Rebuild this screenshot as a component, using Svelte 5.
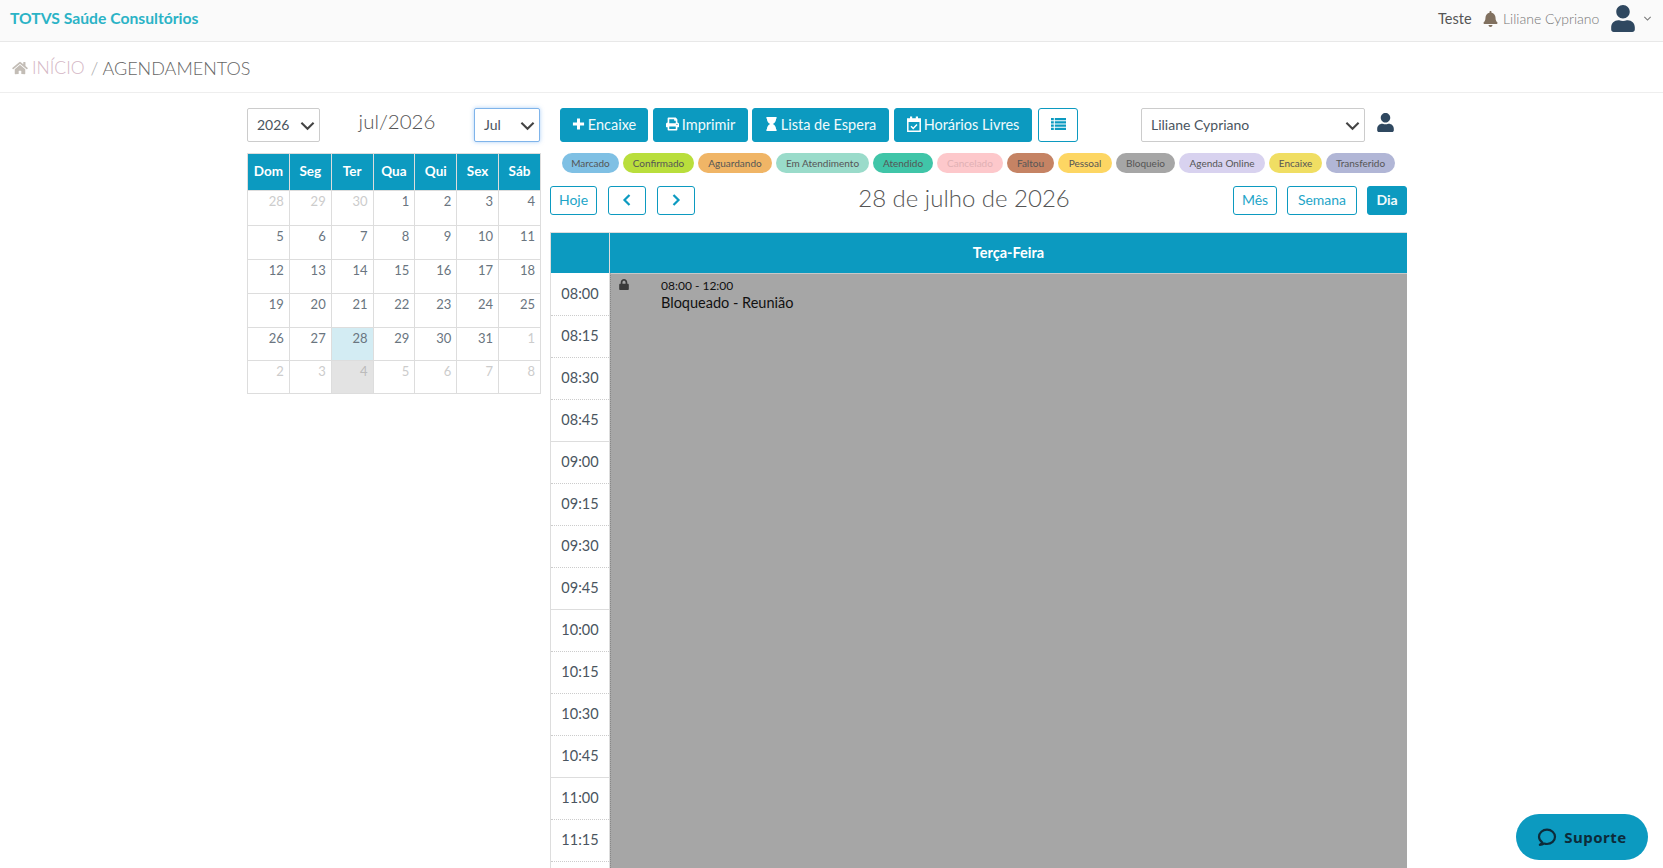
<script>
  const weekDays = ['Dom', 'Seg', 'Ter', 'Qua', 'Qui', 'Sex', 'Sáb']

  const weeks = [
    [[28, 1], [29, 1], [30, 1], [1], [2], [3], [4]],
    [[5], [6], [7], [8], [9], [10], [11]],
    [[12], [13], [14], [15], [16], [17], [18]],
    [[19], [20], [21], [22], [23], [24], [25]],
    [[26], [27], [28, 0, 'today'], [29], [30], [31], [1, 1]],
    [[2, 1], [3, 1], [4, 1, 'shade'], [5, 1], [6, 1], [7, 1], [8, 1]],
  ]

  const legend = [
    ['Marcado', '#7fc0e4', 57],
    ['Confirmado', '#b9de3c', 71],
    ['Aguardando', '#f0b566', 74],
    ['Em Atendimento', '#9adbca', 93],
    ['Atendido', '#40c5a8', 60],
    ['Cancelado', '#fdc8cb', 66, true],
    ['Faltou', '#c58364', 47],
    ['Pessoal', '#fdd663', 54],
    ['Bloqueio', '#a6a6a6', 59],
    ['Agenda Online', '#d8d2ef', 86],
    ['Encaixe', '#f0de63', 53],
    ['Transferido', '#b1b6d6', 69],
  ]

  // 11:30 falls below the fold in the screenshot
  const slots = ['08:00', '08:15', '08:30', '08:45', '09:00', '09:15', '09:30', '09:45',
    '10:00', '10:15', '10:30', '10:45', '11:00', '11:15']

  const userPath = 'M224 256c70.7 0 128-57.3 128-128S294.7 0 224 0 96 57.3 96 128s57.3 128 128 128zm89.6 32h-16.7c-22.2 10.2-46.9 16-72.9 16s-50.6-5.8-72.9-16h-16.7C60.2 288 0 348.2 0 422.4V464c0 26.5 21.5 48 48 48h352c26.5 0 48-21.5 48-48v-41.6c0-74.2-60.2-134.4-134.4-134.4z'
</script>

{#snippet chevron()}
  <svg class="chev" viewBox="0 0 16 16"><path d="M1.500 5 8 11.500 14.500 5" fill="none" stroke="#444" stroke-width="2.200" /></svg>
{/snippet}

<header class="topbar">
  <span class="brand">TOTVS Saúde Consultórios</span>
  <div class="top-right">
    <span class="teste">Teste</span>
    <svg class="bell" viewBox="0 0 448 512"><path fill="#80705f" d="M224 512c35.32 0 63.97-28.65 63.97-64H160.03c0 35.35 28.65 64 63.97 64zm215.39-149.71c-19.32-20.76-55.47-51.99-55.47-154.29 0-77.7-54.48-139.9-127.94-155.16V32c0-17.67-14.32-32-31.98-32s-31.98 14.33-31.98 32v20.84C118.56 68.1 64.08 130.3 64.08 208c0 102.3-36.15 133.53-55.47 154.29-6 6.45-8.66 14.16-8.61 21.71.11 16.4 12.98 32 32.1 32h383.8c19.12 0 32-15.6 32.1-32 .05-7.55-2.61-15.27-8.61-21.71z" /></svg>
    <span class="username">Liliane Cypriano</span>
    <svg class="avatar" viewBox="0 0 448 512"><path fill="#2f4860" d={userPath} /></svg>
    <svg class="caret" viewBox="0 0 10 10"><path d="M1.500 3.200 5 6.700l3.500-3.500" fill="none" stroke="#777" stroke-width="1.200" /></svg>
  </div>
</header>

<nav class="crumbs">
  <svg class="home" viewBox="0 0 576 512"><path fill="#c3bdb6" d="M280.37 148.26L96 300.11V464a16 16 0 0 0 16 16l112.06-.29a16 16 0 0 0 15.92-16V368a16 16 0 0 1 16-16h64a16 16 0 0 1 16 16v95.64a16 16 0 0 0 16 16.05L464 480a16 16 0 0 0 16-16V300L295.67 148.26a12.19 12.19 0 0 0-15.3 0zM571.6 251.47L488 182.56V44.05a12 12 0 0 0-12-12h-56a12 12 0 0 0-12 12v72.61L318.47 43a48 48 0 0 0-61 0L4.34 251.47a12 12 0 0 0-1.6 16.9l25.5 31A12 12 0 0 0 45.15 301l235.22-193.74a12.19 12.19 0 0 1 15.3 0L530.9 301a12 12 0 0 0 16.9-1.6l25.5-31a12 12 0 0 0-1.7-16.93z" /></svg>
  <span class="crumb-link">INÍCIO</span>
  <span class="crumb-sep">/</span>
  <span class="crumb-now">AGENDAMENTOS</span>
</nav>

<main class="page">
  <section class="side">
    <div class="side-top">
      <div class="select year"><span>2026</span>{@render chevron()}</div>
      <div class="side-title">jul/2026</div>
      <div class="select month"><span>Jul</span>{@render chevron()}</div>
    </div>
    <table class="mini">
      <thead>
        <tr>{#each weekDays as d}<th>{d}</th>{/each}</tr>
      </thead>
      <tbody>
        {#each weeks as week}
          <tr>
            {#each week as [n, muted, kind]}
              <td class={kind} class:muted>{n}</td>
            {/each}
          </tr>
        {/each}
      </tbody>
    </table>
  </section>

  <section class="agenda">
    <div class="actions">
      <button class="solid enc">
        <svg viewBox="0 0 14 14" class="ic"><path fill="#fff" d="M5.400 1h3.200v4.400H13v3.200H8.600V13H5.400V8.600H1V5.400h4.400z" /></svg>Encaixe
      </button>
      <button class="solid imp">
        <svg viewBox="0 0 512 512" class="ic"><path fill="#fff" d="M448 192V77.25c0-8.49-3.37-16.62-9.37-22.63L393.37 9.37c-6-6-14.14-9.37-22.63-9.37H96C78.33 0 64 14.33 64 32v160c-35.35 0-64 28.65-64 64v112c0 8.84 7.16 16 16 16h48v96c0 17.67 14.33 32 32 32h320c17.67 0 32-14.33 32-32v-96h48c8.84 0 16-7.16 16-16V256c0-35.35-28.65-64-64-64zm-64 256H128v-96h256v96zm0-224H128V64h192v48c0 8.84 7.16 16 16 16h48v96zm48 72c-13.25 0-24-10.75-24-24 0-13.26 10.75-24 24-24s24 10.74 24 24c0 13.25-10.75 24-24 24z" /></svg>Imprimir
      </button>
      <button class="solid lis">
        <svg viewBox="0 0 384 512" class="ic"><path fill="#fff" d="M360 64c13.255 0 24-10.745 24-24V24c0-13.255-10.745-24-24-24H24C10.745 0 0 10.745 0 24v16c0 13.255 10.745 24 24 24 0 90.965 51.016 167.734 120.842 192C75.016 280.266 24 357.035 24 448c-13.255 0-24 10.745-24 24v16c0 13.255 10.745 24 24 24h336c13.255 0 24-10.745 24-24v-16c0-13.255-10.745-24-24-24 0-90.965-51.016-167.734-120.842-192C308.984 231.734 360 154.965 360 64z" /></svg>Lista de Espera
      </button>
      <button class="solid hor">
        <svg viewBox="0 0 14 16" class="ic cal"><path fill="none" stroke="#fff" stroke-width="1.500" d="M.8 3.200h12.400v12H.8z" /><path fill="#fff" d="M0 2.500h14v3.500H0zM3 .5h2.200v3H3zM8.800.5H11v3H8.800z" /><path fill="none" stroke="#fff" stroke-width="1.400" d="m4 10.300 2.200 2.200 3.800-4" /></svg>Horários Livres
      </button>
      <button class="outline lst" aria-label="Lista">
        <svg viewBox="0 0 15 12" class="list-ic"><path fill="#0c9ac0" d="M0 0h2.800v2.300H0zM3.800 0H15v2.300H3.800zM0 3.200h2.800v2.300H0zM3.800 3.200H15v2.300H3.800zM0 6.500h2.800v2.300H0zM3.800 6.500H15v2.300H3.800zM0 9.700h2.800V12H0zM3.800 9.700H15V12H3.800z" /></svg>
      </button>
      <div class="select prof"><span>Liliane Cypriano</span>{@render chevron()}</div>
      <svg class="prof-ic" viewBox="0 0 448 512"><path fill="#2f4860" d={userPath} /></svg>
    </div>

    <div class="legend">
      {#each legend as [label, color, width, faded]}
        <span class="pill" class:faded style="background:{color};width:{width}px">{label}</span>
      {/each}
    </div>

    <div class="toolbar">
      <div class="tool-left">
        <button class="outline hoje">Hoje</button>
        <button class="outline nav" aria-label="Anterior">
          <svg viewBox="0 0 12 14"><path d="M8.500 2 3.500 7l5 5" fill="none" stroke="#0c9ac0" stroke-width="2.200" /></svg>
        </button>
        <button class="outline nav" aria-label="Próximo">
          <svg viewBox="0 0 12 14"><path d="m3.500 2 5 5-5 5" fill="none" stroke="#0c9ac0" stroke-width="2.200" /></svg>
        </button>
      </div>
      <h2>28 de julho de 2026</h2>
      <div class="tool-right">
        <button class="outline mes">Mês</button>
        <button class="outline sem">Semana</button>
        <button class="solid dia">Dia</button>
      </div>
    </div>

    <div class="grid-head">
      <div class="corner"></div>
      <div class="dayname">Terça-Feira</div>
    </div>
    <div class="grid-body">
      <div class="times">
        {#each slots as s, i}
          <div class="slot" class:hour={i % 4 === 3}>{s}</div>
        {/each}
      </div>
      <div class="events">
        <div class="event">
          <svg class="lock" viewBox="0 0 448 512"><path fill="#3b3b3b" d="M400 224h-24v-72C376 68.2 307.8 0 224 0S72 68.2 72 152v72H48c-26.5 0-48 21.5-48 48v192c0 26.5 21.5 48 48 48h352c26.5 0 48-21.500 48-48V272c0-26.5-21.5-48-48-48zm-104 0H152v-72c0-39.7 32.3-72 72-72s72 32.3 72 72v72z" /></svg>
          <div class="event-text">
            <div class="event-time">08:00 - 12:00</div>
            <div class="event-title">Bloqueado - Reunião</div>
          </div>
        </div>
      </div>
    </div>
  </section>
</main>

<button class="support">
  <svg viewBox="0 0 20 20"><path fill="none" stroke="#0d2b3a" stroke-width="2.200" stroke-linejoin="round" d="M5.200 15.400C3.300 14 2 12 2 9.800 2 5.800 5.600 2.600 10 2.600s8 3.200 8 7.200-3.600 7.200-8 7.200c-1 0-2-.2-2.900-.5-1.100.7-2.600 1.200-4.300 1.300.8-.7 1.900-1.300 2.400-2.400z" /></svg>
  Suporte
</button>

<style>
  :global(html), :global(body) {
    margin: 0;
    height: 868px;
    overflow: hidden;
    background: #fff;
  }
  :global(body) {
    font-family: Lato, "Open Sans", sans-serif;
    font-size: 14px;
    color: #4a5560;
  }
  button {
    font-family: inherit;
    cursor: pointer;
    box-sizing: border-box;
  }

  .topbar {
    height: 41px;
    border-bottom: 1px solid #e8e8e8;
    background: #fafafa;
    display: flex;
    align-items: center;
    justify-content: space-between;
    padding: 0 15px 0 10px;
  }
  .brand {
    color: #2bb3c6;
    font-weight: 700;
    font-size: 15.7px;
    position: relative;
    top: -3px;
  }
  .top-right {
    display: flex;
    align-items: center;
    position: relative;
    top: -2px;
    left: 4px;
  }
  .teste {
    font-size: 14.5px;
    color: #555;
    width: 44px;
    position: relative;
    left: -1px;
  }
  .bell {
    width: 15px;
    height: 16px;
    margin-right: 5px;
  }
  .username {
    font-size: 14px;
    font-weight: 300;
    color: #777;
    width: 108px;
  }
  .avatar {
    width: 24px;
    height: 27px;
    margin-right: 8px;
  }
  .caret {
    width: 9px;
    height: 9px;
  }

  .crumbs {
    box-sizing: border-box;
    height: 51px;
    border-bottom: 1px solid #eee;
    display: flex;
    align-items: center;
    padding: 1px 0 0 12px;
    font-size: 18px;
    font-weight: 300;
  }
  .home {
    width: 16px;
    height: 14px;
    margin-right: 4px;
  }
  .crumb-link {
    color: #d4b6c4;
    font-size: 17.5px;
  }
  .crumb-sep {
    margin: 0 4px 0 6px;
    color: #aaa;
  }
  .crumb-now {
    color: #666;
  }

  .page {
    display: flex;
    padding: 15px 0 0 247px;
    align-items: flex-start;
  }
  .side {
    width: 294px;
    margin-right: 9px;
  }
  .side-top {
    display: flex;
    align-items: center;
    justify-content: space-between;
    height: 34px;
    margin-bottom: 11px;
    padding-right: 1px;
    box-sizing: border-box;
  }
  .select {
    box-sizing: border-box;
    height: 34px;
    border: 1px solid #ccc;
    border-radius: 2px;
    background: #fff;
    display: flex;
    align-items: center;
    justify-content: space-between;
    padding: 0 4px 0 9px;
    font-size: 14px;
    color: #4a5560;
  }
  .select span {
    position: relative;
    top: -1px;
  }
  .chev {
    width: 15px;
    height: 15px;
  }
  .year {
    width: 73px;
  }
  .month {
    width: 66px;
    border-color: #7fb4ea;
    box-shadow: 0 0 4px rgba(90, 160, 240, 0.5);
  }
  .side-title {
    font-size: 20.5px;
    font-weight: 300;
    color: #555;
    position: relative;
    top: -4px;
  }
  .mini {
    width: 294px;
    table-layout: fixed;
    border-collapse: collapse;
  }
  .mini th {
    height: 37px;
    padding: 0 0 3px;
    box-sizing: border-box;
    background: #0c9ac0;
    color: #fff;
    font-size: 13.5px;
    font-weight: 700;
    border: 1px solid #ddd;
  }
  .mini td {
    height: 34px;
    box-sizing: border-box;
    padding: 2px 5px 0 0;
    vertical-align: top;
    text-align: right;
    font-size: 13px;
    color: #6a7580;
    border: 1px solid #ddd;
  }
  .mini tr:first-child td {
    height: 35px;
  }
  .mini tr:nth-child(n + 5) td {
    height: 33px;
  }
  .mini td.muted {
    color: #ccc;
  }
  .mini td.today {
    background: #d3ecf3;
  }
  .mini td.shade {
    background: #e3e3e3;
    color: #bbb;
  }

  .agenda {
    width: 857px;
  }
  .actions {
    display: flex;
    align-items: center;
    height: 34px;
    padding-left: 10px;
  }
  .solid {
    background: #0c9ac0;
    border: 1px solid #0c9ac0;
    border-radius: 3px;
    color: #f1fafc;
    font-size: 14.5px;
    height: 34px;
    padding: 0 0 2px;
    display: flex;
    align-items: center;
    justify-content: center;
  }
  .outline {
    background: #fff;
    border: 1px solid #0c9ac0;
    border-radius: 3px;
    color: #1ea5c8;
    font-size: 14px;
    height: 29px;
    padding: 0 0 2px;
    display: flex;
    align-items: center;
    justify-content: center;
  }
  .ic {
    width: 13px;
    height: 14px;
    margin-right: 3px;
  }
  .ic.cal {
    width: 14px;
    height: 16px;
  }
  .enc { width: 88px; margin-right: 5px; }
  .imp { width: 95px; margin-right: 4px; }
  .lis { width: 137px; margin-right: 5px; }
  .hor { width: 138px; margin-right: 6px; }
  .lst { width: 40px; height: 34px; margin-right: 63px; }
  .list-ic { width: 15px; height: 12px; }
  .prof {
    width: 224px;
    margin-right: 12px;
    padding-left: 9px;
  }
  .prof-ic {
    width: 17px;
    height: 19px;
    position: relative;
    top: -3px;
  }

  .legend {
    display: flex;
    gap: 4px;
    margin: 11px 0 0 12px;
  }
  .pill {
    box-sizing: border-box;
    height: 20px;
    border-radius: 10px;
    font-size: 10px;
    line-height: 20px;
    text-align: center;
    color: #555;
    white-space: nowrap;
  }
  .pill.faded {
    color: #e0b0b4;
  }

  .toolbar {
    position: relative;
    display: flex;
    align-items: center;
    justify-content: space-between;
    height: 29px;
    margin-top: 13px;
  }
  .tool-left, .tool-right {
    display: flex;
  }
  .hoje { width: 47px; margin-right: 11px; }
  .nav { width: 38px; margin-right: 11px; }
  .nav:last-child { margin-right: 0; }
  .nav svg { width: 12px; height: 14px; }
  .mes { width: 44px; margin-right: 10px; }
  .sem { width: 70px; margin-right: 10px; }
  .dia {
    width: 40px;
    height: 29px;
    font-size: 14px;
    font-weight: 700;
  }
  h2 {
    margin: 0;
    position: absolute;
    left: 0;
    width: 828px;
    text-align: center;
    font-size: 24px;
    font-weight: 300;
    color: #555;
    top: -3px;
  }

  .grid-head {
    display: flex;
    margin-top: 17px;
    height: 40px;
    border: 1px solid #ddd;
    border-bottom: 0;
    border-right: 0;
    background: #0c9ac0;
    color: #fff;
    font-weight: 700;
    font-size: 14.5px;
  }
  .corner {
    width: 58px;
    border-right: 1px solid #ddd;
  }
  .dayname {
    flex: 1;
    text-align: center;
    line-height: 39px;
  }
  .grid-body {
    display: flex;
    border-left: 1px solid #ddd;
  }
  .times {
    width: 58px;
    padding-top: 1px;
    border-right: 1px solid #ddd;
  }
  .slot {
    box-sizing: border-box;
    height: 42px;
    line-height: 40px;
    text-align: center;
    font-size: 14.5px;
    color: #4a5560;
    border-bottom: 1px dotted #ccc;
  }
  .slot.hour {
    border-bottom: 1px solid #ddd;
  }
  .events {
    flex: 1;
    box-sizing: border-box;
    background: #a6a6a6;
    height: 595px;
    border-top: 1px solid #c8c8c8;
    border-left: 1px dotted #888;
  }
  .event {
    display: flex;
    padding: 4px 0 0 8px;
  }
  .lock {
    width: 10px;
    height: 11px;
    margin-right: 32px;
    margin-top: 1px;
  }
  .event-text {
    color: #111;
  }
  .event-time {
    font-size: 12px;
    line-height: 15px;
  }
  .event-title {
    font-size: 14.5px;
    line-height: 19px;
  }

  .support {
    position: fixed;
    left: 1516px;
    top: 814px;
    width: 132px;
    height: 46px;
    border: 0;
    border-radius: 23px;
    background: #0c9ac0;
    color: #0d2b3a;
    font-family: "Noto Sans", sans-serif;
    font-weight: 700;
    font-size: 15px;
    letter-spacing: 0.5px;
    display: flex;
    align-items: center;
    justify-content: center;
    gap: 7px;
    padding: 0;
  }
  .support svg {
    width: 20px;
    height: 20px;
  }
</style>
